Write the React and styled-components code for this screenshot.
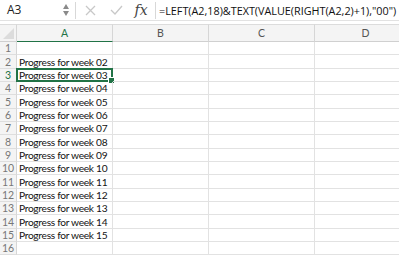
import React from "react";
import styled, { createGlobalStyle } from "styled-components";

const GlobalStyle = createGlobalStyle`
  html, body { margin: 0; padding: 0; background: #fff; }
  body { font-family: "Open Sans", "Liberation Sans", sans-serif; overflow: hidden; }
`;

const Sheet = styled.div`
  width: 399px;
  height: 257px;
  overflow: hidden;
  background: #fff;
`;

const FormulaBar = styled.div`
  display: flex;
  align-items: center;
  height: 20px;
  border-bottom: 1px solid #e2e2e2;
  color: #222;
`;

const NameBox = styled.div`
  width: 56px;
  padding-left: 7px;
  font-size: 12px;
  line-height: 20px;
`;

const Stepper = styled.div`
  display: flex;
  flex-direction: column;
  gap: 2px;
  width: 6px;
`;

const Sep = styled.div`
  width: 1px;
  height: 17px;
  background: #d8d8d8;
  margin: ${(p) => p.$m};
`;

const IconSlot = styled.div`
  display: flex;
  align-items: center;
  justify-content: center;
  width: ${(p) => p.$w}px;
`;

const Fx = styled.span`
  font-family: "DejaVu Serif", "Liberation Serif", serif;
  font-style: italic;
  font-size: 14px;
  color: #444;
  width: 22px;
  margin-left: 3px;
  text-align: center;
`;

const Formula = styled.div`
  font-size: 10.8px;
  white-space: nowrap;
  color: #111;
`;

const Grid = styled.div`
  display: grid;
  grid-template-columns: 17px 96px 96px 106px 102px;
  margin-top: 3px;
  font-family: Lato, "Open Sans", sans-serif;
`;

const Head = styled.div`
  height: 16px;
  background: #f4f4f4;
  border-top: 1px solid #dcdcdc;
  border-right: 1px solid #d6d6d6;
  border-bottom: 1px solid ${(p) => (p.$active ? "#217346" : "#d0d0d0")};
  color: ${(p) => (p.$active ? "#217346" : "#555")};
  font-size: 10.5px;
  line-height: 16px;
  text-align: center;
  position: relative;
  box-sizing: content-box;
`;

const Corner = styled.div`
  position: absolute;
  right: 2px;
  bottom: 2px;
  width: 0;
  height: 0;
  border-left: 11px solid transparent;
  border-bottom: 11px solid #dcdcdc;
`;

const RowNum = styled.div`
  box-sizing: border-box;
  background: #f4f4f4;
  border-right: 1px solid ${(p) => (p.$active ? "#217346" : "#d6d6d6")};
  border-bottom: 1px solid #dedede;
  color: ${(p) => (p.$active ? "#217346" : "#777")};
  font-size: 10.5px;
  display: flex;
  align-items: center;
  justify-content: center;
`;

const Cell = styled.div`
  box-sizing: border-box;
  min-width: 0;
  border-right: 1px solid #e2e2e2;
  border-bottom: 1px solid #e2e2e2;
  font-size: 10.2px;
  letter-spacing: -0.3px;
  color: #111;
  padding-left: 2px;
  display: flex;
  align-items: center;
  white-space: nowrap;
  position: relative;
`;

const Selection = styled.div`
  position: absolute;
  left: -1px;
  top: -1px;
  right: -1px;
  bottom: -1px;
  border: 2px solid #217346;
`;

const Handle = styled.div`
  position: absolute;
  right: -4px;
  bottom: -4px;
  width: 5px;
  height: 5px;
  background: #217346;
  border: 1px solid #fff;
`;

const cols = ["A", "B", "C", "D"];
const rows = Array.from({ length: 16 }, (_, i) => i + 1);
const top = (n) => Math.round(41 + (n - 1) * 13.33);

function Triangle({ up }) {
  return (
    <svg width="6" height="5" viewBox="0 0 6 5">
      <path d={up ? "M3 0 L6 5 L0 5 Z" : "M0 0 L6 0 L3 5 Z"} fill="#8a8a8a" />
    </svg>
  );
}

export default function App() {
  const text = (n) => (n >= 2 && n <= 15 ? `Progress for week ${String(n).padStart(2, "0")}` : "");
  return (
    <Sheet>
      <GlobalStyle />
      <FormulaBar>
        <NameBox>A3</NameBox>
        <Stepper>
          <Triangle up />
          <Triangle />
        </Stepper>
        <Sep $m="0 0 0 6px" />
        <IconSlot $w={29}>
          <svg width="11" height="11" viewBox="0 0 11 11">
            <path d="M1 1 L10 10 M10 1 L1 10" stroke="#c8c8c8" strokeWidth="1.3" />
          </svg>
        </IconSlot>
        <IconSlot $w={22}>
          <svg width="13" height="10" viewBox="0 0 13 10">
            <path d="M1 5 L5 9 L12 1" stroke="#c8c8c8" strokeWidth="1.3" fill="none" />
          </svg>
        </IconSlot>
        <Fx>fx</Fx>
        <Sep $m="0 3px 0 3px" />
        <Formula>=LEFT(A2,18)&amp;TEXT(VALUE(RIGHT(A2,2)+1),"00")</Formula>
      </FormulaBar>
      <Grid>
        <Head>
          <Corner />
        </Head>
        {cols.map((c) => (
          <Head key={c} $active={c === "A"}>
            {c}
          </Head>
        ))}
        {rows.map((n) => {
          const h = top(n + 1) - top(n);
          return (
            <React.Fragment key={n}>
              <RowNum $active={n === 3} style={{ height: h }}>
                {n}
              </RowNum>
              {cols.map((c) => (
                <Cell key={c} style={{ height: h }}>
                  {c === "A" ? text(n) : ""}
                  {c === "A" && n === 3 && (
                    <Selection>
                      <Handle />
                    </Selection>
                  )}
                </Cell>
              ))}
            </React.Fragment>
          );
        })}
      </Grid>
    </Sheet>
  );
}
